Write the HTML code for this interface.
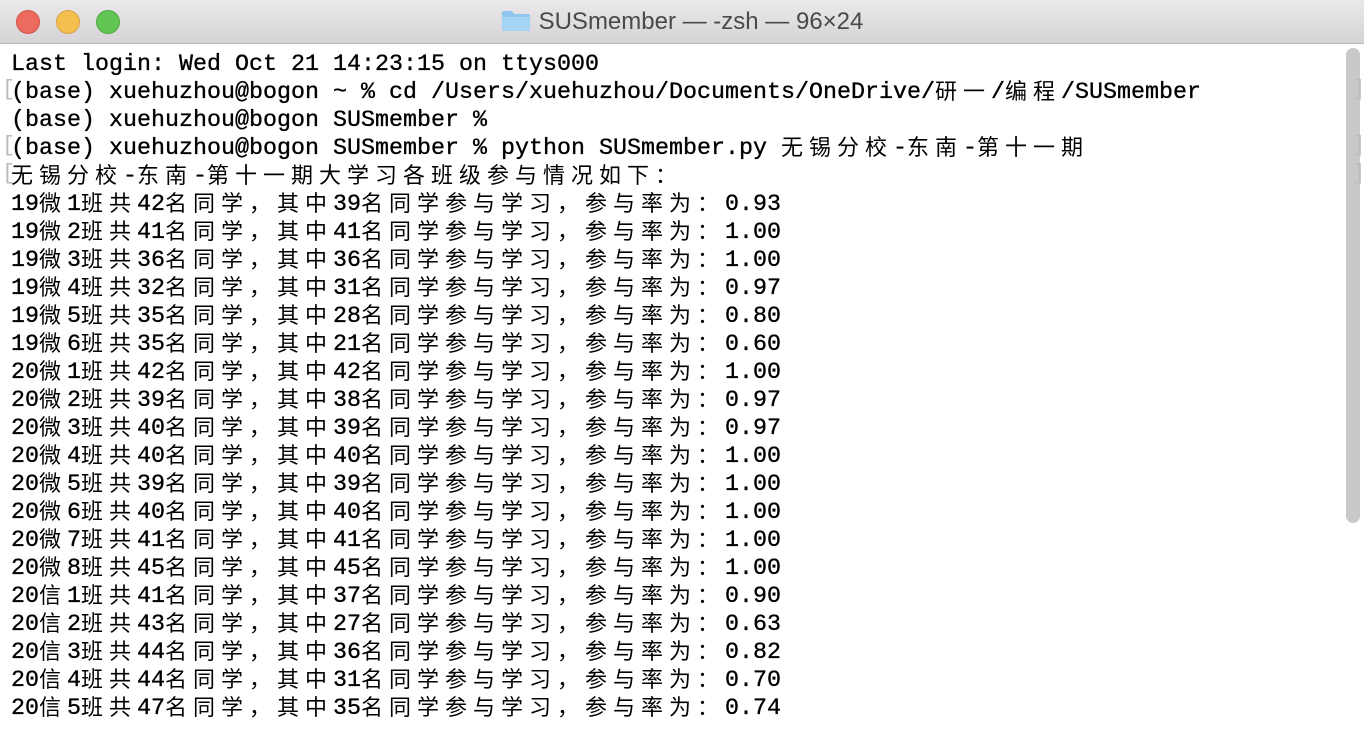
<!DOCTYPE html>
<html><head><meta charset="utf-8">
<style>
html,body{margin:0;padding:0;width:1364px;height:730px;overflow:hidden;background:#fff}
.tb{position:absolute;left:0;top:0;width:1364px;height:44px;background:linear-gradient(#ebe9eb,#d5d3d5);border-bottom:1px solid #b9b7b9;box-sizing:border-box}
.dot{position:absolute;top:10px;width:24px;height:24px;border-radius:50%}
.title{position:absolute;left:0;width:1364px;top:8px;text-align:center;font:24px "Liberation Sans","Noto Sans CJK SC",sans-serif;color:#4a4a4a}
.folder{display:inline-block;width:30px;height:22px;position:relative;vertical-align:-3px;margin-right:8px}
#t{position:absolute;left:11px;top:51px;margin:0;font:23.33px/28px "Liberation Mono","Noto Sans CJK SC",monospace;color:#000;-webkit-text-stroke:0.35px #000;white-space:pre}
#t div{height:28px;line-height:28px;overflow:visible}
.w{display:inline-block;width:28px;height:28px;font-size:22px;font-family:"Noto Sans CJK SC",sans-serif;text-align:left;line-height:28px;vertical-align:top;position:relative;top:-3px;-webkit-text-stroke:0}
.br{position:absolute;color:#bbb;font:22px/28px "Liberation Mono",monospace}
.sb{position:absolute;left:1346px;top:48px;width:14px;height:475px;border-radius:7px;background:#c9c9c9}
</style></head><body>
<div class="tb">
<div class="dot" style="left:16px;background:#ed6a5e;border:1px solid #d25448;box-sizing:border-box"></div>
<div class="dot" style="left:56px;background:#f5bf4f;border:1px solid #d6a243;box-sizing:border-box"></div>
<div class="dot" style="left:96px;background:#61c554;border:1px solid #52a842;box-sizing:border-box"></div>
<div class="title"><span class="folder"><svg width="30" height="22"><path d="M1 3 Q1 1 3 1 H11 L13 4 H27 Q29 4 29 6 V20 Q29 21 27 21 H3 Q1 21 1 19 Z" fill="#8ec6f0"/><path d="M1 7 H29 V20 Q29 21 27 21 H3 Q1 21 1 19 Z" fill="#a6d4f5"/></svg></span>SUSmember — -zsh — 96×24</div>
</div>
<div class="sb"></div>
<div class="br" style="left:2px;top:76px">[</div><div class="br" style="left:1352px;top:76px">]</div>
<div class="br" style="left:2px;top:132px">[</div><div class="br" style="left:1352px;top:132px">]</div>
<div class="br" style="left:2px;top:160px">[</div><div class="br" style="left:1352px;top:160px">]</div>
<div id="t">Last login: Wed Oct 21 14:23:15 on ttys000
(base) xuehuzhou@bogon ~ % cd /Users/xuehuzhou/Documents/OneDrive/研一/编程/SUSmember
(base) xuehuzhou@bogon SUSmember %
(base) xuehuzhou@bogon SUSmember % python SUSmember.py 无锡分校-东南-第十一期
无锡分校-东南-第十一期大学习各班级参与情况如下：
19微1班共42名同学，其中39名同学参与学习，参与率为：0.93
19微2班共41名同学，其中41名同学参与学习，参与率为：1.00
19微3班共36名同学，其中36名同学参与学习，参与率为：1.00
19微4班共32名同学，其中31名同学参与学习，参与率为：0.97
19微5班共35名同学，其中28名同学参与学习，参与率为：0.80
19微6班共35名同学，其中21名同学参与学习，参与率为：0.60
20微1班共42名同学，其中42名同学参与学习，参与率为：1.00
20微2班共39名同学，其中38名同学参与学习，参与率为：0.97
20微3班共40名同学，其中39名同学参与学习，参与率为：0.97
20微4班共40名同学，其中40名同学参与学习，参与率为：1.00
20微5班共39名同学，其中39名同学参与学习，参与率为：1.00
20微6班共40名同学，其中40名同学参与学习，参与率为：1.00
20微7班共41名同学，其中41名同学参与学习，参与率为：1.00
20微8班共45名同学，其中45名同学参与学习，参与率为：1.00
20信1班共41名同学，其中37名同学参与学习，参与率为：0.90
20信2班共43名同学，其中27名同学参与学习，参与率为：0.63
20信3班共44名同学，其中36名同学参与学习，参与率为：0.82
20信4班共44名同学，其中31名同学参与学习，参与率为：0.70
20信5班共47名同学，其中35名同学参与学习，参与率为：0.74</div>
<script>
var p=document.getElementById('t');var L=p.textContent.split('\n'),o='';
for(var j=0;j<L.length;j++){var s=L[j];o+='<div>';
for(var i=0;i<s.length;i++){var c=s[i];if(c.charCodeAt(0)>0x2000){o+='<span class="w">'+c+'</span>';}else o+=c.replace('&','&amp;').replace('<','&lt;');}
o+='</div>';}
p.innerHTML=o;
</script>
</body></html>
